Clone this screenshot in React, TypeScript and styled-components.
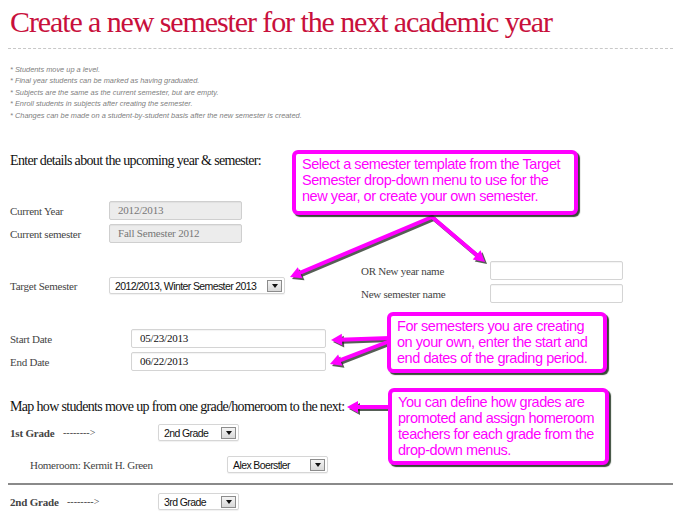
import { FC } from "react";
import styled, { createGlobalStyle } from "styled-components";

const GlobalStyle = createGlobalStyle`
  html, body {
    margin: 0;
    padding: 0;
    background: #fff;
  }
  body {
    font-family: "Liberation Serif", "Times New Roman", serif;
  }
`;

const Page = styled.div`
  position: relative;
  width: 680px;
  height: 520px;
  overflow: hidden;
  padding: 0 7px 0 8px;
  box-sizing: border-box;
`;

const Title = styled.h1`
  margin: 0;
  padding: 4px 0 0 2px;
  font-family: "Liberation Serif", serif;
  font-weight: normal;
  font-size: 30px;
  line-height: 36px;
  color: #c8103c;
  letter-spacing: -1.1px;
  white-space: nowrap;
`;

const Rule = styled.div<{ $dashed?: boolean }>`
  border-top: ${(p) => (p.$dashed ? "1px dashed #c8c8c8" : "2px solid #8a8a8a")};
  margin: ${(p) => (p.$dashed ? "8px 0 0" : "10px 0 0")};
`;

const Notes = styled.ul`
  list-style: none;
  margin: 15px 0 0;
  padding: 0 0 0 2px;
  font-family: "Liberation Sans", Arial, sans-serif;
  font-style: italic;
  font-size: 7.4px;
  line-height: 11.4px;
  color: #808080;
`;

const Heading = styled.div<{ $top: number }>`
  margin-top: ${(p) => p.$top}px;
  padding-left: 2px;
  font-size: 14px;
  line-height: 16px;
  letter-spacing: -0.66px;
  color: #111;
  white-space: nowrap;
`;

const FieldGrid = styled.div<{ $label: number; $top: number; $left?: number }>`
  display: grid;
  grid-template-columns: ${(p) => p.$label}px auto;
  row-gap: 4px;
  align-items: center;
  margin-top: ${(p) => p.$top}px;
  margin-left: ${(p) => p.$left || 0}px;
  padding-left: 2px;
  justify-content: start;
`;

const Label = styled.span`
  font-size: 11px;
  letter-spacing: -0.25px;
  color: #444;
  white-space: nowrap;
`;

const TextBox = styled.div<{ $w: number; $disabled?: boolean }>`
  width: ${(p) => p.$w}px;
  height: 19px;
  box-sizing: border-box;
  border: 1px solid ${(p) => (p.$disabled ? "#cfcfcf" : "#d4d4d4")};
  border-radius: 2px;
  background: ${(p) => (p.$disabled ? "#ececec" : "#fff")};
  box-shadow: inset 0 1px 1px rgba(0, 0, 0, 0.05);
  padding: 0 8px;
  font-size: 11px;
  letter-spacing: -0.2px;
  line-height: 17px;
  color: ${(p) => (p.$disabled ? "#777" : "#111")};
  white-space: nowrap;
`;

const SelectBox = styled.div<{ $w: number }>`
  display: flex;
  align-items: center;
  justify-content: space-between;
  width: ${(p) => p.$w}px;
  height: 17px;
  box-sizing: border-box;
  border: 1px solid #d6d6d6;
  border-radius: 2px;
  background: #fff;
  box-shadow: 0 1px 1px rgba(0, 0, 0, 0.06);
  padding: 0 2px 0 5px;
  font-family: "Liberation Sans", Arial, sans-serif;
  font-size: 10.5px;
  letter-spacing: -0.6px;
  color: #111;
  white-space: nowrap;
`;

const DropButton = styled.span`
  display: flex;
  align-items: center;
  justify-content: center;
  width: 15px;
  height: 12px;
  box-sizing: border-box;
  border: 1px solid #8c8c8c;
  background: linear-gradient(#f4f4f4, #d8d8d8);
  &::after {
    content: "";
    border-left: 3.5px solid transparent;
    border-right: 3.5px solid transparent;
    border-top: 4px solid #111;
  }
`;

const Select: FC<{ value: string; w: number }> = ({ value, w }) => (
  <SelectBox $w={w}>
    <span>{value}</span>
    <DropButton />
  </SelectBox>
);

const TargetRow = styled.div`
  display: flex;
  align-items: flex-start;
  margin-top: 18px;
  padding-left: 2px;
`;

const TargetLeft = styled.div`
  display: grid;
  grid-template-columns: 99px auto;
  align-items: center;
  margin-top: 16px;
`;

const GradeRow = styled.div<{ $top: number; $indent?: number }>`
  display: flex;
  align-items: center;
  margin-top: ${(p) => p.$top}px;
  padding-left: ${(p) => 2 + (p.$indent || 0)}px;
`;

const GradeName = styled.span<{ $w: number }>`
  width: ${(p) => p.$w}px;
  font-size: 11px;
  font-weight: bold;
  letter-spacing: -0.2px;
  color: #444;
`;

const Dashes = styled.span<{ $w: number }>`
  width: ${(p) => p.$w}px;
  font-size: 10px;
  color: #444;
`;

const HomeroomLabel = styled.span`
  width: 197px;
  font-size: 11px;
  letter-spacing: -0.3px;
  color: #444;
`;

const Callout = styled.div<{ $x: number; $y: number; $w: number; $h: number }>`
  position: absolute;
  left: ${(p) => p.$x}px;
  top: ${(p) => p.$y}px;
  width: ${(p) => p.$w}px;
  height: ${(p) => p.$h}px;
  box-sizing: border-box;
  border: 4px solid #ff00ff;
  border-radius: 6px;
  background: #fff;
  box-shadow: 2px 2px 1px rgba(20, 40, 20, 0.85);
  padding: 2px 0 0 6px;
  font-family: "Liberation Sans", Arial, sans-serif;
  font-size: 14.5px;
  line-height: 16px;
  letter-spacing: -0.45px;
  color: #ff00ff;
  white-space: nowrap;
`;

const CalloutLine = styled.div``;

const Overlay = styled.svg`
  position: absolute;
  left: 0;
  top: 0;
  pointer-events: none;
`;

type Arrow = { x1: number; y1: number; x2: number; y2: number };

const arrows: Arrow[] = [
  { x1: 432, y1: 217, x2: 290, y2: 277 },
  { x1: 432, y1: 217, x2: 485, y2: 262 },
  { x1: 390, y1: 338, x2: 331, y2: 340 },
  { x1: 390, y1: 341, x2: 330, y2: 364 },
  { x1: 390, y1: 407, x2: 347, y2: 407 },
];

const headPoints = ({ x1, y1, x2, y2 }: Arrow) => {
  const a = Math.atan2(y2 - y1, x2 - x1);
  const len = 11;
  const half = 6;
  const bx = x2 - Math.cos(a) * len;
  const by = y2 - Math.sin(a) * len;
  const nx = -Math.sin(a) * half;
  const ny = Math.cos(a) * half;
  return `${x2},${y2} ${bx + nx},${by + ny} ${bx - nx},${by - ny}`;
};

const ArrowShape: FC<{ a: Arrow; dx?: number; color: string }> = ({ a, dx = 0, color }) => {
  const ang = Math.atan2(a.y2 - a.y1, a.x2 - a.x1);
  const ex = a.x2 - Math.cos(ang) * 9;
  const ey = a.y2 - Math.sin(ang) * 9;
  return (
    <g transform={`translate(${dx} ${dx})`}>
      <line x1={a.x1} y1={a.y1} x2={ex} y2={ey} stroke={color} strokeWidth={4} strokeLinecap="round" />
      <polygon points={headPoints(a)} fill={color} />
    </g>
  );
};

const notes = [
  "* Students move up a level.",
  "* Final year students can be marked as having graduated.",
  "* Subjects are the same as the current semester, but are empty.",
  "* Enroll students in subjects after creating the semester.",
  "* Changes can be made on a student-by-student basis after the new semester is created.",
];

const callouts = [
  {
    x: 292,
    y: 150,
    w: 286,
    h: 65,
    lines: [
      "Select a semester template from the Target",
      "Semester drop-down menu to use for the",
      "new year, or create your own semester.",
    ],
  },
  {
    x: 387,
    y: 312,
    w: 220,
    h: 61,
    lines: [
      "For semesters you are creating",
      "on your own, enter the start and",
      "end dates of the grading period.",
    ],
  },
  {
    x: 388,
    y: 388,
    w: 221,
    h: 77,
    lines: [
      "You can define how grades are",
      "promoted and assign homeroom",
      "teachers for each grade from the",
      "drop-down menus.",
    ],
  },
];

export default function App() {
  return (
    <Page>
      <GlobalStyle />
      <Title>Create a new semester for the next academic year</Title>
      <Rule $dashed />
      <Notes>
        {notes.map((n) => (
          <li key={n}>{n}</li>
        ))}
      </Notes>

      <Heading $top={32}>Enter details about the upcoming year &amp; semester:</Heading>

      <FieldGrid $label={99} $top={32}>
        <Label>Current Year</Label>
        <TextBox $w={133} $disabled>2012/2013</TextBox>
        <Label>Current semester</Label>
        <TextBox $w={133} $disabled>Fall Semester 2012</TextBox>
      </FieldGrid>

      <TargetRow>
        <TargetLeft>
          <Label>Target Semester</Label>
          <Select w={176} value="2012/2013, Winter Semester 2013" />
        </TargetLeft>
        <FieldGrid $label={129} $top={0} $left={74}>
          <Label>OR New year name</Label>
          <TextBox $w={133} />
          <Label>New semester name</Label>
          <TextBox $w={133} />
        </FieldGrid>
      </TargetRow>

      <FieldGrid $label={121} $top={26}>
        <Label>Start Date</Label>
        <TextBox $w={195}>05/23/2013</TextBox>
        <Label>End Date</Label>
        <TextBox $w={195}>06/22/2013</TextBox>
      </FieldGrid>

      <Heading $top={28}>Map how students move up from one grade/homeroom to the next:</Heading>

      <GradeRow $top={9}>
        <GradeName $w={53}>1st Grade</GradeName>
        <Dashes $w={95}>--------&gt;</Dashes>
        <Select w={81} value="2nd Grade" />
      </GradeRow>
      <GradeRow $top={15} $indent={20}>
        <HomeroomLabel>Homeroom: Kermit H. Green</HomeroomLabel>
        <Select w={101} value="Alex Boerstler" />
      </GradeRow>
      <Rule />
      <GradeRow $top={8}>
        <GradeName $w={57}>2nd Grade</GradeName>
        <Dashes $w={91}>--------&gt;</Dashes>
        <Select w={81} value="3rd Grade" />
      </GradeRow>

      <Overlay width={680} height={520}>
        {arrows.map((a, i) => (
          <ArrowShape key={`s${i}`} a={a} dx={2} color="rgba(30,40,30,0.75)" />
        ))}
        {arrows.map((a, i) => (
          <ArrowShape key={`a${i}`} a={a} color="#ff00ff" />
        ))}
      </Overlay>

      {callouts.map((c) => (
        <Callout key={c.x} $x={c.x} $y={c.y} $w={c.w} $h={c.h}>
          {c.lines.map((l) => (
            <CalloutLine key={l}>{l}</CalloutLine>
          ))}
        </Callout>
      ))}
    </Page>
  );
}
